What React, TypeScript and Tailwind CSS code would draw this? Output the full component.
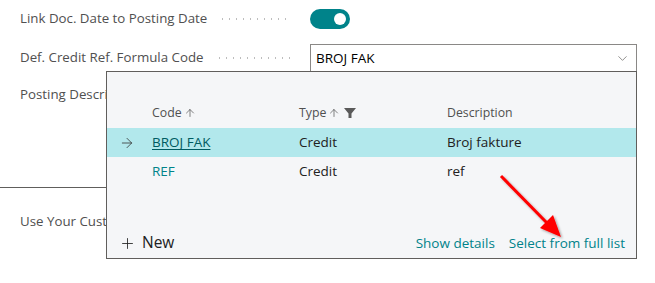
import { ChevronDown, Plus, ArrowRight, ArrowUp } from "lucide-react";

function Leader() {
  return (
    <div className="flex-1 ml-3 mr-[10px] h-[2px] bg-[radial-gradient(circle,#bdbdbd_0.9px,transparent_1.1px)] bg-[length:7px_2px]" />
  );
}

function FieldRow({
  label,
  children,
  className = "",
}: {
  label: string;
  children?: React.ReactNode;
  className?: string;
}) {
  return (
    <div className={`flex items-center ${className}`}>
      <div className="w-[282px] flex items-center">
        <span className="text-[13.3px] text-[#505050] whitespace-nowrap">{label}</span>
        <Leader />
      </div>
      <div className="ml-2 flex-1">{children}</div>
    </div>
  );
}

export default function App() {
  return (
    <div
      className="relative w-[655px] h-[283px] bg-white overflow-hidden"
      style={{ fontFamily: '"Segoe UI", "Open Sans", "Noto Sans", sans-serif' }}
    >
      <div className="pl-5 pr-[18px]">
        <FieldRow label="Link Doc. Date to Posting Date" className="h-[38px]">
          <div className="w-10 h-5 rounded-full bg-[#00838a] flex items-center justify-end pr-[4px]">
            <div className="w-3 h-3 rounded-full bg-white" />
          </div>
        </FieldRow>
        <FieldRow label="Def. Credit Ref. Formula Code" className="h-[38px] pt-[2px]">
          <div className="h-7 border border-[#8a8886] flex items-center justify-between pl-[5px] pr-[6px]">
            <span className="text-[13.5px] text-black">BROJ FAK</span>
            <ChevronDown className="w-[15px] h-[15px] text-[#605e5c]" strokeWidth={1.1} />
          </div>
        </FieldRow>
        <FieldRow label="Posting Description" className="h-[38px]" />
      </div>

      <div className="mt-[73px] w-[106px] border-t border-[#605e5c]" />

      <div className="pl-5 mt-[24px]">
        <FieldRow label="Use Your Custom Templates" className="h-5" />
      </div>

      {/* lookup dropdown */}
      <div className="absolute left-[106px] top-[71px] w-[531px] h-[188px] bg-[#f5f6f8] border border-[#605e5c] flex flex-col">
        <div className="flex items-center h-[56px] pt-[26px] text-[12.3px] text-[#505050]">
          <div className="w-[45px]" />
          <div className="w-[147px] flex items-center gap-[2px]">
            Code <ArrowUp className="w-3 h-3" strokeWidth={1.4} />
          </div>
          <div className="w-[148px] flex items-center gap-[2px]">
            Type <ArrowUp className="w-3 h-3" strokeWidth={1.4} />
            <svg viewBox="0 0 12 12" className="w-3 h-3 ml-[2px]">
              <path d="M0 1h12L7.5 6.5V11h-3V6.5z" fill="#5a5a5a" />
            </svg>
          </div>
          <div>Description</div>
        </div>
        <div className="flex items-center h-[29px] bg-[#b2e8ec] text-[13.5px] text-[#212121]">
          <div className="w-[45px] pl-[12px]">
            <ArrowRight className="w-4 h-4 text-[#333]" strokeWidth={1.2} />
          </div>
          <div className="w-[147px] text-[#005b61] underline underline-offset-2">BROJ FAK</div>
          <div className="w-[148px]">Credit</div>
          <div>Broj fakture</div>
        </div>
        <div className="flex items-center h-[29px] text-[13.5px] text-[#212121]">
          <div className="w-[45px]" />
          <div className="w-[147px] text-[#00838a]">REF</div>
          <div className="w-[148px]">Credit</div>
          <div>ref</div>
        </div>
        <div className="mt-auto flex items-center h-[30px] pl-[12px] pr-[11px]">
          <div className="flex items-center gap-[6px] text-[15.5px] text-[#212121]">
            <Plus className="w-[17px] h-[17px]" strokeWidth={1.2} />
            New
          </div>
          <div className="ml-auto flex gap-[14px] text-[13.5px] text-[#00838a]">
            <span>Show details</span>
            <span>Select from full list</span>
          </div>
        </div>
      </div>

      {/* annotation arrow */}
      <svg className="absolute left-0 top-0 pointer-events-none" width="655" height="283">
        <defs>
          <filter id="sh" x="-20%" y="-20%" width="140%" height="140%">
            <feDropShadow dx="1.5" dy="1.5" stdDeviation="1" floodColor="#000" floodOpacity="0.35" />
          </filter>
        </defs>
        <g filter="url(#sh)">
          <line x1="501" y1="176" x2="548" y2="224" stroke="#ff0000" strokeWidth="3" />
          <path d="M561 237 L540 228 L553 215 Z" fill="#ff0000" />
        </g>
      </svg>
    </div>
  );
}
